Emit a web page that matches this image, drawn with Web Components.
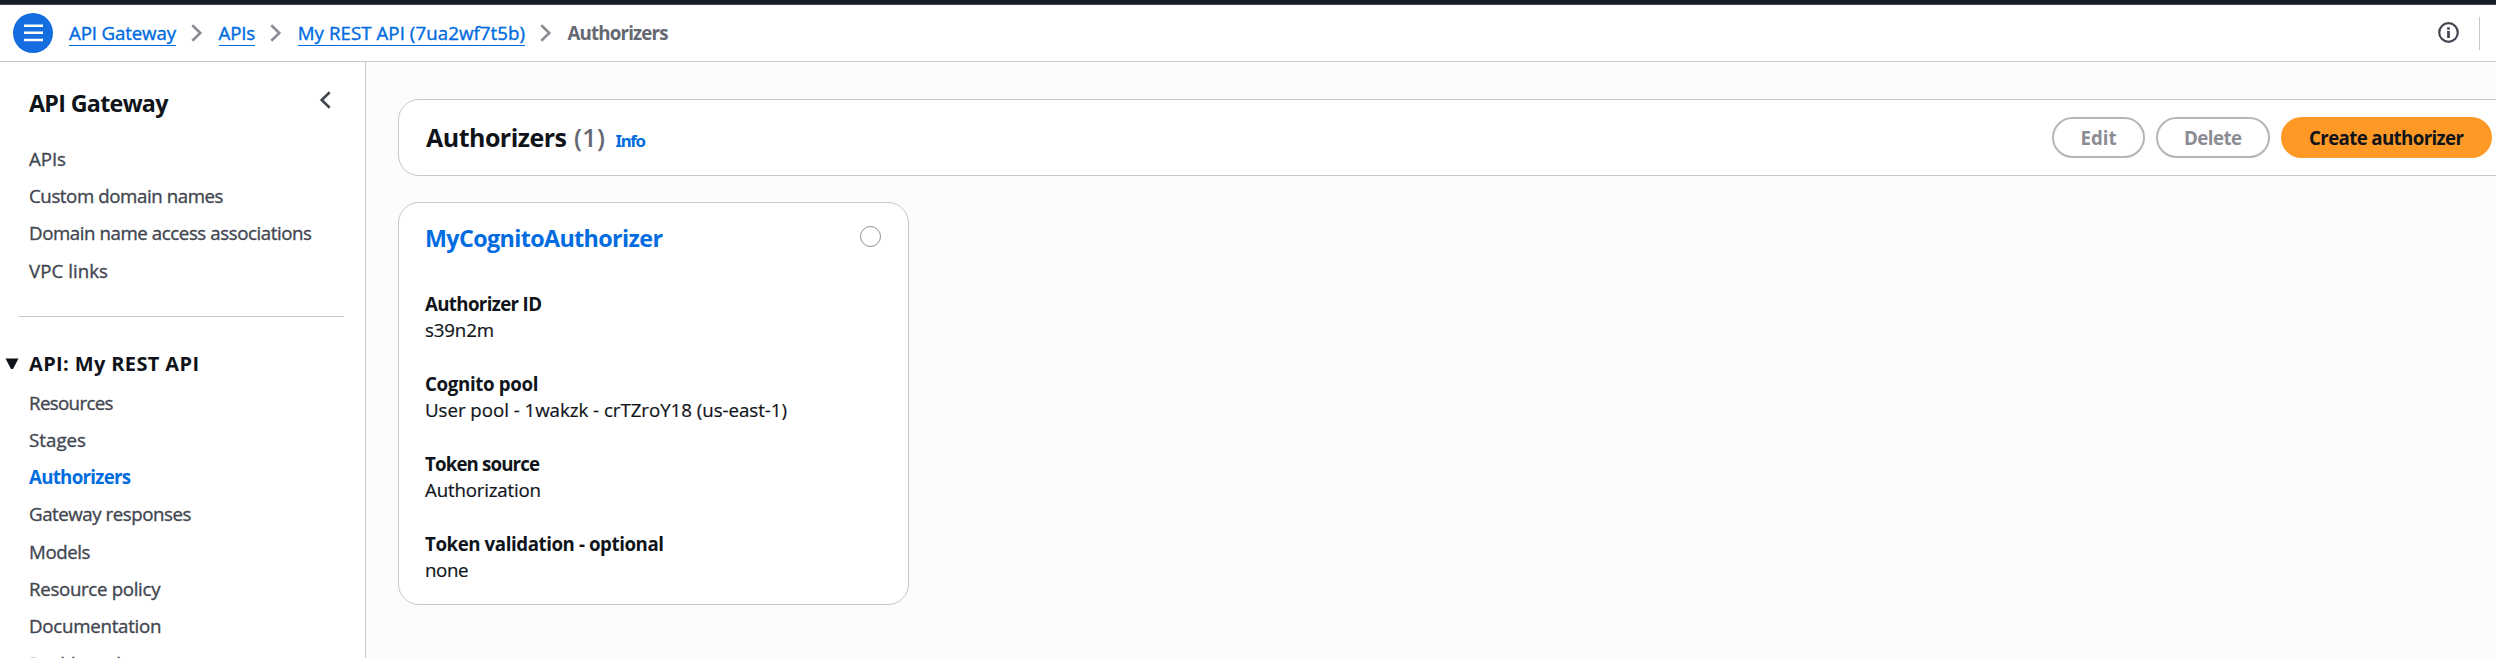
<!DOCTYPE html>
<html lang="en">
<head>
<meta charset="utf-8">
<title>API Gateway - Authorizers</title>
<style>
html,body{margin:0;height:100%;overflow:hidden;background:#fcfcfd}
body{font-family:"Open Sans","Noto Sans",sans-serif;font-size:18.7px;color:#0f141a}
</style>
</head>
<body>
<console-app></console-app>
<script>
const define = (name, html, setup) => {
  const tpl = document.createElement('template');
  tpl.innerHTML = html;
  customElements.define(name, class extends HTMLElement {
    constructor() {
      super();
      this.attachShadow({ mode: 'open' }).append(tpl.content.cloneNode(true));
    }
    connectedCallback() { if (setup) setup(this, this.shadowRoot); }
  });
};

/* One line of text tracked to a given width. */
define('fit-text', `<style>
:host{display:block;white-space:nowrap;flex:none}
span{display:inline-block;white-space:nowrap}
</style><span><slot></slot></span>`, (el, root) => {
  const span = root.querySelector('span');
  const w = parseFloat(el.getAttribute('w'));
  const n = el.textContent.length;
  const natural = span.getBoundingClientRect().width;
  span.style.letterSpacing = ((w - natural) / (n - 1)).toFixed(3) + 'px';
  el.style.width = w + 'px';
});

define('chevron-icon', `<style>
:host{display:block;flex:none;width:12px;height:18px;color:#8c8c94}
:host([left]){transform:scaleX(-1);color:#424650}
svg{display:block}
</style><svg width="12" height="18" viewBox="0 0 12 18" fill="none" stroke="currentColor" stroke-width="2.6"><path d="M1.3 1.2 9.3 9l-8 7.8"/></svg>`);

define('crumb-link', `<style>
:host{display:block;color:#006ce0;line-height:28px;height:26px;border-bottom:1px solid #006ce0;-webkit-text-stroke:.4px #006ce0}
</style><slot></slot>`);

define('top-bar', `<style>
:host{display:flex;box-sizing:border-box;height:62px;padding:0 16px 0 13px;background:#fff;border-top:4px solid #161d26;border-bottom:1px solid #c6c6cd;box-shadow:inset 0 1px #424650;align-items:flex-start}
.menu{width:40px;height:40px;margin-top:9px;border-radius:50%;background:#146edf;flex:none}
nav{display:flex;margin:15px 0 0 16px;flex:1}
chevron-icon{margin:5px 15.5px 0 15px}
.here{font-weight:700;color:#656871;line-height:28px}
.info{margin-top:18px}
svg{display:block}
.rule{width:1px;height:33px;background:#c6c6cd;margin:13px 0 0 20px}
</style>
<div class="menu"><svg width="40" height="40" stroke="#fff" stroke-width="2.5"><path d="M11 12.7h19M11 19.8h19M11 27h19"/></svg></div>
<nav>
<crumb-link><fit-text w="107">API Gateway</fit-text></crumb-link><chevron-icon></chevron-icon>
<crumb-link><fit-text w="36.7">APIs</fit-text></crumb-link><chevron-icon></chevron-icon>
<crumb-link><fit-text w="227.3">My REST API (7ua2wf7t5b)</fit-text></crumb-link><chevron-icon></chevron-icon>
<fit-text class="here" w="101">Authorizers</fit-text>
</nav>
<svg class="info" width="21" height="21" fill="none" stroke="#424650"><circle cx="10.5" cy="10.5" r="9.3" stroke-width="2.2"/><path d="M10.5 5.2v2.6M10.5 9v7" stroke-width="2.7"/><path d="M9 9.8h2" stroke-width="1.5"/></svg>
<div class="rule"></div>`);

define('nav-item', `<style>
:host{display:block;height:37.33px;line-height:37.33px;color:#424650;-webkit-text-stroke:.35px #424650}
:host([active]){color:#006ce0;font-weight:700;-webkit-text-stroke:0}
</style><slot></slot>`);

define('side-nav', `<style>
:host{display:block;box-sizing:border-box;width:366px;background:#fff;border-right:1px solid #c6c6cd;overflow:hidden;flex:none}
header{display:flex;justify-content:space-between;padding:25px 34px 0 29px;font-size:23.3px;font-weight:700;line-height:32px}
header chevron-icon{margin-top:4px}
.group{padding-left:29px}
.first{margin-top:20.6px}
hr{border:0;height:1px;background:#c6c6cd;margin:27px 21px 0 19px}
h3{display:flex;align-items:center;margin:32px 0 0;padding-left:5px;font-size:20px;line-height:30px;height:30px}
h3 svg{display:block;margin-right:10px}
.second{margin-top:4.6px}
</style>
<header><fit-text w="139.5">API Gateway</fit-text><chevron-icon left></chevron-icon></header>
<div class="group first">
<nav-item><fit-text w="37">APIs</fit-text></nav-item>
<nav-item><fit-text w="194.5">Custom domain names</fit-text></nav-item>
<nav-item><fit-text w="283">Domain name access associations</fit-text></nav-item>
<nav-item><fit-text w="79">VPC links</fit-text></nav-item>
</div>
<hr>
<h3><svg width="14" height="12"><path d="M0.5 0.5h13L8 11H6z" fill="#0f141a"/></svg><fit-text w="170">API: My REST API</fit-text></h3>
<div class="group second">
<nav-item><fit-text w="84.5">Resources</fit-text></nav-item>
<nav-item><fit-text w="57">Stages</fit-text></nav-item>
<nav-item active><fit-text w="102">Authorizers</fit-text></nav-item>
<nav-item><fit-text w="162.5">Gateway responses</fit-text></nav-item>
<nav-item><fit-text w="61.5">Models</fit-text></nav-item>
<nav-item><fit-text w="131.5">Resource policy</fit-text></nav-item>
<nav-item><fit-text w="132.5">Documentation</fit-text></nav-item>
<nav-item><fit-text w="92">Dashboard</fit-text></nav-item>
</div>`);

define('pill-button', `<style>
:host{display:flex;justify-content:center;box-sizing:border-box;height:41px;border:2px solid #b4b4bb;border-radius:20.5px;color:#8c8c94;font-weight:700;line-height:37px;flex:none}
:host([primary]){background:#ff9926;border-color:#ff9926;color:#0f141a}
</style><slot></slot>`);

define('panel-header', `<style>
:host{display:flex;box-sizing:border-box;height:77px;width:2120px;border:1px solid #c6c6cd;border-radius:21px;background:#fff;padding:17px 25px 0 27px;font-weight:700}
.title{display:flex;flex:1;line-height:40px;font-size:25px}
.count{color:#656871;margin-left:7px;font-weight:600}
.info{color:#006ce0;font:700 16.8px/47px "Noto Sans",sans-serif;margin-left:10.5px}
.actions{display:flex;gap:11px}
</style>
<div class="title"><fit-text w="141">Authorizers</fit-text><fit-text class="count" w="31">(1)</fit-text><fit-text class="info" w="30.5">Info</fit-text></div>
<div class="actions">
<pill-button style="width:93px"><fit-text w="36">Edit</fit-text></pill-button>
<pill-button style="width:114px"><fit-text w="58">Delete</fit-text></pill-button>
<pill-button primary style="width:211px"><fit-text w="155">Create authorizer</fit-text></pill-button>
</div>`);

define('detail-field', `<style>
:host{display:block;height:80px;line-height:26px}
.label{font-weight:700}
.value{-webkit-text-stroke:.2px #0f141a}
</style><div class="label"><slot name="label"></slot></div><div class="value"><slot></slot></div>`);

define('authorizer-card', `<style>
:host{display:block;box-sizing:border-box;width:511px;height:403px;border:1px solid #c6c6cd;border-radius:21px;background:#fff;padding:19px 27px 0 26px}
header{display:flex;justify-content:space-between;font-size:23.3px;font-weight:700;line-height:32px;color:#006ce0;height:69px}
i{display:block;box-sizing:border-box;width:21px;height:21px;border:1.5px solid #8c8c94;border-radius:50%;margin-top:4px}
</style>
<header><fit-text w="238">MyCognitoAuthorizer</fit-text><i></i></header>
<detail-field><fit-text slot="label" w="117">Authorizer ID</fit-text><fit-text w="69">s39n2m</fit-text></detail-field>
<detail-field><fit-text slot="label" w="113.5">Cognito pool</fit-text><fit-text w="362">User pool - 1wakzk - crTZroY18 (us-east-1)</fit-text></detail-field>
<detail-field><fit-text slot="label" w="115">Token source</fit-text><fit-text w="116">Authorization</fit-text></detail-field>
<detail-field><fit-text slot="label" w="239">Token validation - optional</fit-text><fit-text w="43.5">none</fit-text></detail-field>`);

define('console-app', `<style>
:host{display:block;height:658px;overflow:hidden}
.body{display:flex;height:596px}
main{flex:1;min-width:0;overflow:hidden;padding:37px 0 0 32px}
authorizer-card{margin-top:26px}
</style>
<top-bar></top-bar>
<div class="body"><side-nav></side-nav><main><panel-header></panel-header><authorizer-card></authorizer-card></main></div>`);
</script>
</body>
</html>
